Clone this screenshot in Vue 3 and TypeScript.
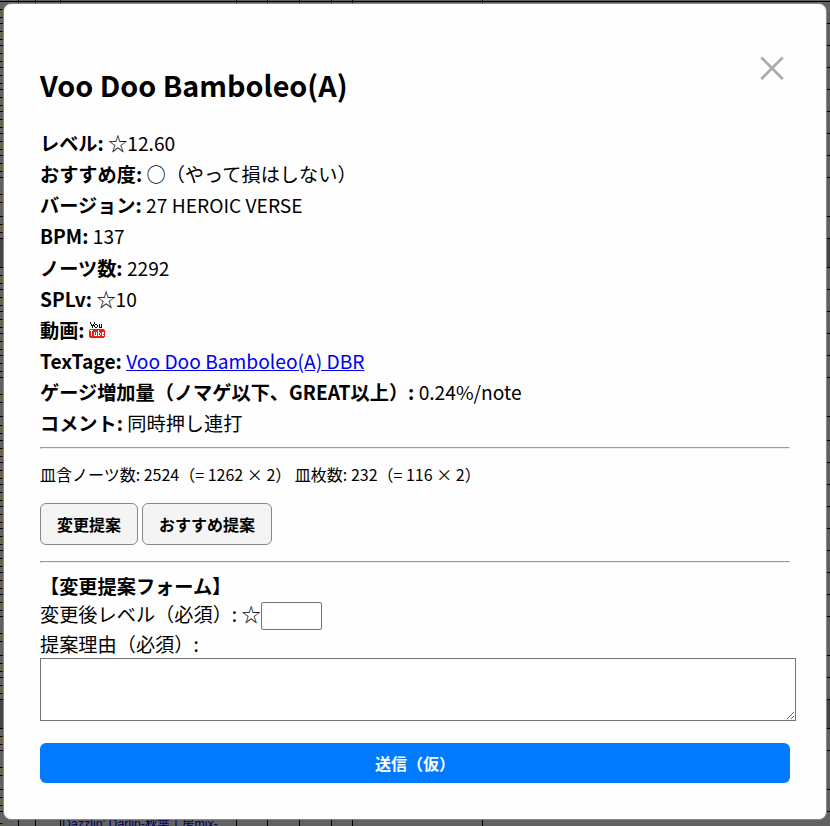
<script setup lang="ts">
import { ref } from 'vue'

interface Detail { label: string; value: string; kind?: 'video' | 'link' }

const title = 'Voo Doo Bamboleo(A)'
const details: Detail[] = [
  { label: 'レベル:', value: '☆12.60' },
  { label: 'おすすめ度:', value: '○（やって損はしない）' },
  { label: 'バージョン:', value: '27 HEROIC VERSE' },
  { label: 'BPM:', value: '137' },
  { label: 'ノーツ数:', value: '2292' },
  { label: 'SPLv:', value: '☆10' },
  { label: '動画:', value: '', kind: 'video' },
  { label: 'TexTage:', value: 'Voo Doo Bamboleo(A) DBR', kind: 'link' },
  { label: 'ゲージ増加量（ノマゲ以下、GREAT以上）:', value: '0.24%/note' },
  { label: 'コメント:', value: '同時押し連打' },
]
// Row boundaries of the song table lying behind the overlay
const rowEnds = [1, 23, 45, 67, 89, 111, 133, 155, 177, 216, 238, 267, 289, 311, 333, 355, 377, 416, 440, 462, 484, 506, 528, 550, 572, 594, 616, 655, 677, 699, 728, 750, 789, 811, 840]
const rows = rowEnds.map((end, i) => ({
  height: i ? end - rowEnds[i - 1] : end + 1,
  group: end === 267 || end === 728,
  icon: i > 0 && end !== 267 && end !== 728,
}))
const columns = [19, 17, 25, 176, 31, 32, 32, 21, 130]
const level = ref('')
const reason = ref('')
</script>

<template>
  <div class="page">
    <div class="table" aria-hidden="true">
      <div v-for="(row, i) in rows" :key="i" class="row" :class="{ group: row.group }" :style="{ height: row.height + 'px' }">
        <span v-if="row.icon" class="mark"></span>
      </div>
      <div class="columns">
        <span v-for="(w, i) in columns" :key="i" :style="{ width: w + 'px' }"></span>
      </div>
      <a class="song">Dazzlin' Darlin-秋葉工房mix-</a>
    </div>
    <main class="modal">
      <button class="close" type="button" aria-label="閉じる">
        <svg viewBox="0 0 26 26"><path d="M2.3 2.5 23.7 24M23.7 2.5 2.3 24" /></svg>
      </button>
      <h2>{{ title }}</h2>
      <div class="details">
        <div v-for="d in details" :key="d.label" class="detail">
          <b>{{ d.label }}</b>{{ ' ' }}<svg v-if="d.kind === 'video'" class="video" viewBox="0 0 16 16" shape-rendering="crispEdges">
            <path class="ink" d="M1 0h1v2h1v1h1V2h1V0h1v2H5v2H4v2H3V4H2V2H1zM6 2h2v1H6zM6 5h2v1H6zM5 3h1v2H5zM8 3h1v2H8zM10 2h1v3h1V2h1v4h-3z" />
            <path class="red" d="M1 7h14v1h1v7h-1v1H1v-1H0V8h1z" />
            <path class="white" d="M1 8h3v1H3v5H2V9H1zM5 10h1v3h1v-3h1v4H5zM9 8h1v2h1v1h-1v2h1v1H9zM11 11h1v2h-1zM13 10h2v2h-1v1h1v1h-2z" />
          </svg><a v-else-if="d.kind === 'link'" href="#">{{ d.value }}</a><template v-else>{{ d.value }}</template>
        </div>
      </div>
      <hr />
      <p class="notes">皿含ノーツ数: 2524（= 1262 × 2） 皿枚数: 232（= 116 × 2）</p>
      <div class="actions">
        <button type="button">変更提案</button>
        <button type="button">おすすめ提案</button>
      </div>
      <hr />
      <form class="form" @submit.prevent>
        <div class="heading">【変更提案フォーム】</div>
        <label class="level">変更後レベル（必須）: ☆<input v-model="level" type="text" /></label>
        <label class="reason">提案理由（必須）:</label>
        <textarea v-model="reason"></textarea>
        <button class="submit" type="submit">送信（仮）</button>
      </form>
    </main>
  </div>
</template>

<style>
body { margin: 0; overflow: hidden; }
</style>

<style scoped>
.page { position: relative; box-sizing: border-box; width: 830px; height: 826px; padding: 3px; overflow: hidden; background: #626262; font-family: "Noto Sans CJK JP", sans-serif; color: #000; }
.table { position: absolute; inset: 0; overflow: hidden; }
.row { box-sizing: border-box; display: flex; align-items: center; border-bottom: 1px solid #000; }
.row.group { background: #454545; }
.mark { box-sizing: border-box; width: 3px; height: 9px; margin-top: 2px; border-top: 1px solid #000; border-bottom: 1px solid #000; border-right: 1px solid #80582a; background: #55676b; }
.columns { position: absolute; inset: 0; display: flex; }
.columns span { box-sizing: border-box; flex: none; border-right: 1px solid #000; }
.song { position: absolute; left: 62px; top: 816px; font: 12.4px/16px "Liberation Sans", "Noto Sans CJK JP", sans-serif; color: #00005f; white-space: nowrap; }
.modal { position: relative; box-sizing: border-box; width: 824px; height: 817px; padding: 59px 36px 36px; border: 1px solid #888; border-radius: 8px; background: #fefefe; font-size: 19.2px; }
.close { position: absolute; top: 50px; right: 40px; width: 28px; height: 28px; padding: 1px; border: 0; background: none; }
.close svg { display: block; width: 26px; height: 26px; fill: none; stroke: #aaa; stroke-width: 2.7; }
h2 { margin: 0; font-size: 28.75px; line-height: 44px; font-weight: 700; }
.details { margin-top: 21.15px; }
.detail { height: 31.1px; line-height: 31.1px; white-space: nowrap; }
.video { width: 16px; height: 16px; vertical-align: 0; }
.ink { fill: #000; }
.red { fill: #f31b0c; }
.white { fill: #fff; }
a { color: #00e; }
hr { width: 750px; margin: 8px 0; box-sizing: border-box; }
.details + hr { margin-top: 7.85px; }
.notes { margin: 13px 0 17px; font-size: 16px; line-height: 24px; white-space: pre; }
.actions { display: flex; gap: 4px; margin-bottom: 16px; }
.actions button { box-sizing: border-box; height: 42px; padding: 0 16px; border: 1px solid #888; border-radius: 6px; background: #f4f4f4; color: #000; font: 700 16px "Noto Sans CJK JP", sans-serif; }
.form { padding-top: 1px; line-height: 28px; }
.heading { font-weight: 700; }
.level { display: flex; align-items: center; height: 29px; white-space: pre; }
input { box-sizing: border-box; width: 61px; height: 28px; margin: 4px 0 0; padding: 1px 2px; border: 1px solid #767676; border-radius: 2px; background: #fff; font-size: 19px; }
.reason { display: block; height: 29px; line-height: 30px; }
textarea { display: block; box-sizing: border-box; width: 756px; height: 63px; margin: 0; border: 1px solid #767676; background: #fff; resize: both; }
.submit { display: block; width: 750px; height: 40px; margin-top: 22px; border: 0; border-radius: 6px; background: #007bff; color: #fff; font: 700 16px "Noto Sans CJK JP", sans-serif; }
</style>
